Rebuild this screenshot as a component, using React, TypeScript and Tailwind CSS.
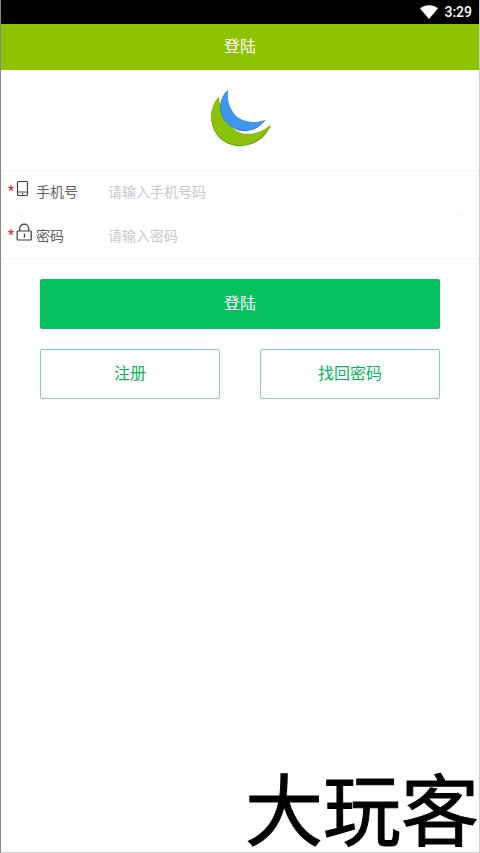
import React from 'react'

const PhoneIcon = () => (
  <svg viewBox="0 0 16 20" className="h-5 w-4" fill="none" stroke="#3a3a3a" aria-hidden="true">
    <rect x="1.5" y="2.5" width="10" height="14" rx="1.2" strokeWidth="1.1" />
    <path d="M1.5 13h10" strokeWidth="0.9" />
    <circle cx="6.5" cy="14.8" r="0.8" fill="#3a3a3a" stroke="none" />
  </svg>
)

const LockIcon = () => (
  <svg viewBox="0 0 16 20" className="h-5 w-4" fill="none" stroke="#3a3a3a" aria-hidden="true">
    <rect x="1.2" y="8" width="14" height="9" rx="0.8" strokeWidth="1.2" />
    <path d="M3.7 8V5.7a4.5 4.5 0 0 1 9 0V8" strokeWidth="1.2" />
    <path d="M8.4 10.5v4" strokeWidth="1.2" />
  </svg>
)

const Logo = () => (
  <svg viewBox="0 0 64 60" className="h-[60px] w-16" aria-hidden="true">
    <path
      d="M11 8C2 17 0 34 9 46C23 64 53 60 63 36C53 45 39 49 28 42C17 35 10 21 11 8Z"
      fill="#5f9408"
    />
    <path
      d="M11 7.5C2 17 0 33 9 45C23 62.5 51 59.5 62.5 36C52 44.5 38 48 28 41.5C17 34.5 12 21 11 7.5Z"
      fill="#8cc10b"
    />
    <path
      d="M20 1C9 11 10 26 20 35C31 46 48 44 57.5 31C48 35 38 34 30 29C21 23 18 11 20 1Z"
      fill="#2573c4"
    />
    <path
      d="M20 1C10 11 11 26 20 34.5C31 45 47 43 57 31C48 34.5 38 33.5 30 28.5C22 22 18.5 11 20 1Z"
      fill="#4096ee"
    />
  </svg>
)

const fields = [
  {
    id: 'phone',
    label: '手机号',
    placeholder: '请输入手机号码',
    type: 'tel',
    icon: <PhoneIcon />,
  },
  {
    id: 'password',
    label: '密码',
    placeholder: '请输入密码',
    type: 'password',
    icon: <LockIcon />,
  },
]

export default function App() {
  return (
    <div className="flex min-h-screen flex-col border-x border-b border-l-[#888888] border-r-[#cccccc] border-b-[#cccccc] bg-white font-['Noto_Sans_CJK_SC',sans-serif]">
      {/* Status bar */}
      <div className="flex h-6 items-center justify-end gap-1.5 bg-black pr-[7px] text-white">
        <svg viewBox="0 0 18 14" className="h-3.5 w-[18px]" fill="#ffffff" aria-hidden="true">
          <path d="M9 14L0 3.4C5-.9 13-.9 18 3.4Z" />
        </svg>
        <span className="font-[Roboto,sans-serif] text-sm font-medium">3:29</span>
      </div>

      <header className="flex h-[46px] items-center justify-center bg-[#8dc300] pb-1">
        <h1 className="text-base text-white">登陆</h1>
      </header>

      <div className="flex h-[100px] justify-center pt-[19px]">
        <Logo />
      </div>

      <form onSubmit={(e) => e.preventDefault()}>
        <div className="border-y border-[#f6f6f6]">
          {fields.map((field, index) => (
            <React.Fragment key={field.id}>
              {index > 0 && <hr className="mx-4 border-[#f6f6f6]" />}
              <div className="flex h-[43px] items-center pr-4 pb-1 pl-[7px] text-sm">
                <span className="w-2 font-[Roboto,sans-serif] text-[#ee0a24]">*</span>
                <label htmlFor={field.id} className="flex w-[92px] items-center gap-1 text-[#606060]">
                  <span className="pb-1">{field.icon}</span>
                  {field.label}
                </label>
                <input
                  id={field.id}
                  type={field.type}
                  placeholder={field.placeholder}
                  className="min-w-0 flex-1 bg-transparent text-[#323233] outline-none placeholder:text-[#c8c9cc]"
                />
              </div>
            </React.Fragment>
          ))}
        </div>

        {/* Actions */}
        <div className="grid grid-cols-2 gap-x-10 gap-y-5 px-[39px] pt-5">
          <button
            type="submit"
            className="col-span-2 h-[50px] rounded-xs bg-[#07c160] pb-1 text-base text-white"
          >
            登陆
          </button>
          <button
            type="button"
            className="h-[50px] rounded-xs border border-[#7dd4a9] bg-white pb-1 text-base text-[#07b45a]"
          >
            注册
          </button>
          <button
            type="button"
            className="h-[50px] rounded-xs border border-[#7dd4a9] bg-white pb-1 text-base text-[#07b45a]"
          >
            找回密码
          </button>
        </div>
      </form>

      <p className="mt-auto pb-1.5 text-right text-[78px] leading-[80px] font-normal text-black [-webkit-text-stroke:1px_#000000]">
        大玩客
      </p>
    </div>
  )
}
